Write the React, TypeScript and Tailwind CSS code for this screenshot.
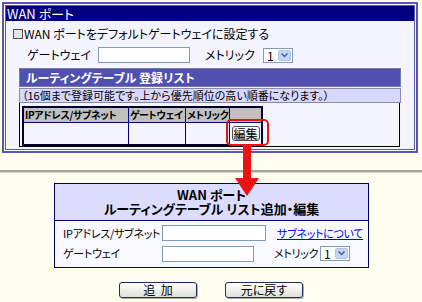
import React from "react";

const Select = () => (
  <div className="w-[30px] h-[15px] border border-[#7f9db9] bg-white flex items-stretch">
    <span className="flex-1 text-[12px] leading-[13px] pl-[3px] text-black">1</span>
    <span className="w-[13px] m-[1px] bg-[#c4d4f8] border border-[#b0c4f0] rounded-[2px] flex items-center justify-center">
      <svg width="7" height="5" viewBox="0 0 7 5">
        <path d="M0.5 0.5 L3.5 3.5 L6.5 0.5" stroke="#4d6185" strokeWidth="1.5" fill="none" />
      </svg>
    </span>
  </div>
);

const Input = ({ w }: { w: string }) => (
  <div className={`${w} h-[16px] border border-[#7f9db9] bg-white`} />
);

export default function App() {
  return (
    <div
      className="w-[422px] h-[302px] bg-[#fffff0] relative overflow-hidden flex flex-col pt-[2px] pl-[2px] text-black [font-feature-settings:'palt']"
      style={{ fontFamily: "'Noto Sans CJK JP', 'Noto Sans', sans-serif" }}
    >
      {/* Top panel */}
      <div className="w-[416px] h-[151px] border-2 border-[#5858b4] p-[1px] bg-white shrink-0">
        <div className="h-full border border-[#5858b4] bg-[#f4f4ff] flex flex-col">
          <div className="h-[15px] bg-[#000080] text-white text-[13px] leading-[15px] pl-[1px]">WAN ポート</div>
          <div className="mt-[5px] h-[16px] pl-[7px] flex items-center text-[12px]">
            <span className="w-[10px] h-[10px] border border-[#505050] bg-[#e4e4e4] mr-[1px]" />
            <span>WAN ポートをデフォルトゲートウェイに設定する</span>
          </div>
          <div className="mt-[5px] h-[16px] pl-[21px] flex items-center text-[12px]">
            <span className="w-[71px]">ゲートウェイ</span>
            <Input w="w-[92px]" />
            <span className="ml-[15px] w-[58px]">メトリック</span>
            <Select />
          </div>
          {/* Routing table box */}
          <div className="mt-[5px] ml-[13px] w-[382px] h-[78px] flex flex-col">
            <div className="h-[19px] bg-[#5050b0] border border-[#7a7a9a] text-white font-bold text-[12px] leading-[17px] pl-[6px]">
              ルーティングテーブル 登録リスト
            </div>
            <div className="mt-[1px] h-[15px] bg-[#d8d8ff] border border-[#8a8aa0] text-[11px] leading-[13px] pl-[2px]">
              （16個まで登録可能です。上から優先順位の高い順番になります。）
            </div>
            <div className="flex-1 border-x border-b border-black w-[381px] pt-[3px] pl-[2px]">
              <div className="w-[241px] border-2 border-[#000030] flex flex-col">
                <div className="flex h-[14px] text-[10px] font-bold leading-[13px] whitespace-nowrap tracking-[-0.4px]">
                  <div className="w-[105px] bg-[#c0c0c0] border-r border-[#000080] pl-[1px] overflow-hidden">IPアドレス/サブネット</div>
                  <div className="w-[57px] bg-[#c0c0c0] border-r border-[#000080] pl-[1px] overflow-hidden">ゲートウェイ</div>
                  <div className="w-[44px] bg-[#c0c0c0] border-r border-[#000080] pl-[1px] overflow-hidden">メトリック</div>
                  <div className="flex-1 bg-[#c0c0c0]" />
                </div>
                <div className="flex h-[22px] border-t border-[#000080]">
                  <div className="w-[105px] border-r border-[#000080]" />
                  <div className="w-[57px] border-r border-[#000080]" />
                  <div className="w-[44px] border-r border-[#000080]" />
                  <div className="flex-1 flex items-center justify-center">
                    <div className="w-[28px] h-[15px] border border-[#505050] rounded-[3px] bg-gradient-to-b from-white to-[#dcdcd4] text-[12px] leading-[13px] text-center">
                      編集
                    </div>
                  </div>
                </div>
              </div>
            </div>
          </div>
        </div>
      </div>

      {/* separator */}
      <div className="mt-[17px] -ml-[2px] w-[422px] h-[3px] border-t-2 border-[#a4a49c] bg-[#d8d8d0] shrink-0" />

      {/* Bottom box */}
      <div className="mt-[10px] ml-[52px] w-[315px] h-[85px] border border-[#000060] bg-[#f8f8ff] flex flex-col shrink-0">
        <div className="h-[37px] bg-[#dcdcff] border-b border-[#000080] flex flex-col items-center justify-center text-[13px] font-bold leading-[14px]">
          <span>WAN ポート</span>
          <span>ルーティングテーブル リスト追加・編集</span>
        </div>
        <div className="mt-[4px] h-[16px] flex items-center text-[11px] pl-[8px] whitespace-nowrap tracking-[-0.3px]">
          <span className="w-[99px]">IPアドレス/サブネット</span>
          <Input w="w-[104px]" />
          <span className="ml-[11px] text-[#0000ff] underline">サブネットについて</span>
        </div>
        <div className="mt-[4px] h-[17px] flex items-center text-[11px] pl-[8px] whitespace-nowrap tracking-[-0.3px]">
          <span className="w-[99px]">ゲートウェイ</span>
          <Input w="w-[92px]" />
          <span className="ml-[20px] w-[46px]">メトリック</span>
          <Select />
        </div>
      </div>

      {/* Buttons */}
      <div className="mt-[14px] ml-[117px] flex gap-[28px] shrink-0">
        <div className="w-[78px] h-[16px] border border-[#1c2c5c] rounded-[3px] bg-gradient-to-b from-white to-[#e0e0d8] shadow-[1px_1px_0_#b0b0a8] text-[12px] leading-[14px] text-center">
          追&nbsp;&nbsp;加
        </div>
        <div className="w-[78px] h-[16px] border border-[#1c2c5c] rounded-[3px] bg-gradient-to-b from-white to-[#e0e0d8] shadow-[1px_1px_0_#b0b0a8] text-[12px] leading-[14px] text-center">
          元に戻す
        </div>
      </div>

      {/* Red highlight overlays */}
      <div className="absolute left-[226px] top-[119px] w-[43px] h-[27px] border-2 border-[#ee1111] rounded-[5px]" />
      <svg className="absolute left-[234px] top-[146px]" width="26" height="51" viewBox="0 0 26 51">
        <rect x="9" y="0" width="8" height="33" fill="#ee1111" />
        <polygon points="1,32 25,32 13,50" fill="#ee1111" />
      </svg>
    </div>
  );
}
